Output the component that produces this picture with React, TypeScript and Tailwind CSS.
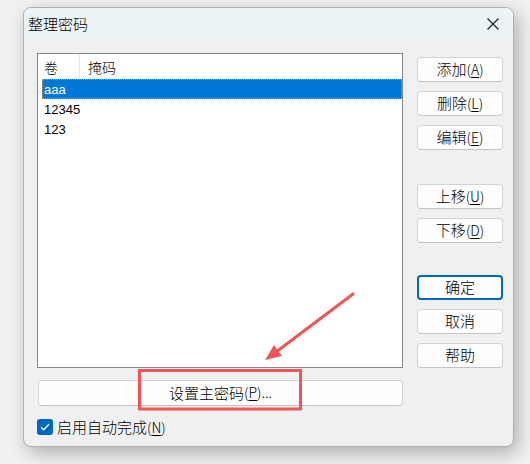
import React from 'react';

const cjk = { fontFamily: '"Noto Sans CJK SC", "Noto Sans", sans-serif' };
const latin = { fontFamily: '"Liberation Sans", "Noto Sans CJK SC", sans-serif' };

const Btn: React.FC<{ label: string; k?: string; primary?: boolean; tail?: string; className?: string }> = ({ label, k, primary, tail, className }) => (
  <button
    className={`h-[25px] w-[86px] rounded-[4px] bg-[#fdfdfd] text-[15px] font-light leading-none text-black flex items-center justify-center pb-[2px] ${
      primary ? 'border-2 border-[#0067c0]' : 'border border-[#d3d3d3] border-b-[#c4c4c4]'
    } ${className ?? ''}`}
    style={cjk}
  >
    <span>{label}</span>
    {k && (
      <span className="text-[14px]">
        (<span className="underline underline-offset-2">{k}</span>)
      </span>
    )}
    {tail && <span className="text-[14px]">{tail}</span>}
  </button>
);

export default function App() {
  return (
    <div className="relative w-[530px] h-[464px] bg-[#f1f1f1] overflow-hidden pt-[7px] pl-[23px]">
      <div className="w-[491px] h-[440px] rounded-[8px] border border-[#b0b0b0] bg-[#f0f0f0] overflow-hidden shadow-[4px_6px_18px_rgba(0,0,0,0.28)] flex flex-col">
        {/* title bar */}
        <div className="h-[31px] bg-[#ebf3f7] flex items-center justify-between pl-[4px] pr-[14px]">
          <span className="text-[15px] font-light text-black leading-none" style={cjk}>整理密码</span>
          <svg width="12" height="12" viewBox="0 0 12 12" className="mt-[1px]">
            <path d="M0.5 0.5 L11.5 11.5 M11.5 0.5 L0.5 11.5" stroke="#1a1a1a" strokeWidth="1.1" />
          </svg>
        </div>

        {/* client */}
        <div className="flex flex-col pt-[14px] pl-[13px]">
          <div className="flex gap-[14px]">
            {/* list */}
            <div className="w-[366px] h-[315px] bg-white border border-[#848890] flex flex-col">
              <div className="h-[25px] flex text-[14px] font-light leading-none text-black" style={cjk}>
                <div className="w-[42px] border-r border-[#e5e5e5] flex items-center pl-[6px]">卷</div>
                <div className="flex items-center pl-[8px]">掩码</div>
              </div>
              <div className="flex flex-col pl-[4px] text-[13px] leading-none" style={latin}>
                <div className="h-[20px] bg-[#0078d7] text-white flex items-center pl-[1px] border border-dotted border-[#e8902a]">aaa</div>
                <div className="h-[20px] flex items-center pl-[2px] text-black">12345</div>
                <div className="h-[20px] flex items-center pl-[2px] text-black">123</div>
              </div>
            </div>

            {/* buttons */}
            <div className="flex flex-col pt-[4px]">
              <Btn label="添加" k="A" />
              <Btn label="删除" k="L" className="mt-[9px]" />
              <Btn label="编辑" k="E" className="mt-[9px]" />
              <Btn label="上移" k="U" className="mt-[34px]" />
              <Btn label="下移" k="D" className="mt-[9px]" />
              <Btn label="确定" primary className="mt-[32px]" />
              <Btn label="取消" className="mt-[9px]" />
              <Btn label="帮助" className="mt-[9px]" />
            </div>
          </div>

          <div className="mt-[12px] pl-[1px]">
            <Btn label="设置主密码" k="P" tail="..." className="!w-[365px] !h-[26px]" />
          </div>

          <div className="mt-[13px] flex items-center gap-[4px]">
            <div className="w-[16px] h-[16px] rounded-[3px] bg-[#0067c0] flex items-center justify-center">
              <svg width="10" height="8" viewBox="0 0 10 8">
                <path d="M1 4.2 L3.7 6.8 L9 1.2" fill="none" stroke="white" strokeWidth="1.3" />
              </svg>
            </div>
            <span className="text-[15px] font-light leading-none text-black pb-[1px]" style={cjk}>
              启用自动完成<span className="text-[14px]">(<span className="underline underline-offset-2">N</span>)</span>
            </span>
          </div>
        </div>
      </div>

      {/* annotation */}
      <svg className="absolute left-0 top-0 pointer-events-none" width="530" height="464" viewBox="0 0 530 464">
        <rect x="139.5" y="370.5" width="161" height="38.5" fill="none" stroke="#f05656" strokeWidth="3" />
        <line x1="353" y1="294" x2="276" y2="352" stroke="#f05656" strokeWidth="3" strokeLinecap="round" />
        <polygon points="265,360 282,356 274,345" fill="#f05656" />
      </svg>
    </div>
  );
}
